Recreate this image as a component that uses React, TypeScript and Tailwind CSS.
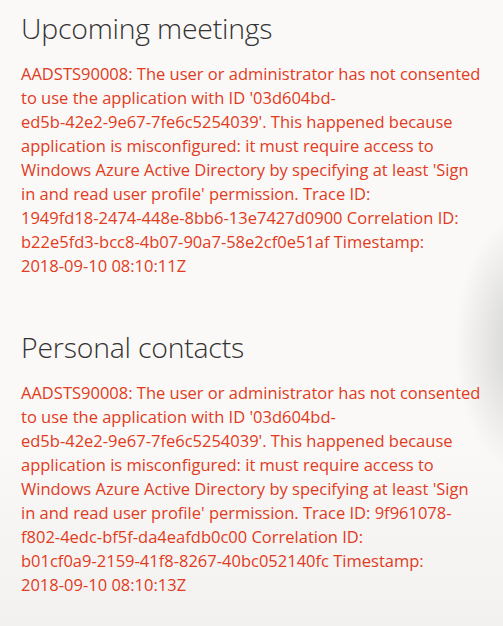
import React from "react";

const s1 = [
  "AADSTS90008: The user or administrator has not consented",
  "to use the application with ID '03d604bd-",
  "ed5b-42e2-9e67-7fe6c5254039'. This happened because",
  "application is misconfigured: it must require access to",
  "Windows Azure Active Directory by specifying at least 'Sign",
  "in and read user profile' permission. Trace ID:",
  "1949fd18-2474-448e-8bb6-13e7427d0900 Correlation ID:",
  "b22e5fd3-bcc8-4b07-90a7-58e2cf0e51af Timestamp:",
  "2018-09-10 08:10:11Z",
];

const s2 = [
  "AADSTS90008: The user or administrator has not consented",
  "to use the application with ID '03d604bd-",
  "ed5b-42e2-9e67-7fe6c5254039'. This happened because",
  "application is misconfigured: it must require access to",
  "Windows Azure Active Directory by specifying at least 'Sign",
  "in and read user profile' permission. Trace ID: 9f961078-",
  "f802-4edc-bf5f-da4eafdb0c00 Correlation ID:",
  "b01cf0a9-2159-41f8-8267-40bc052140fc Timestamp:",
  "2018-09-10 08:10:13Z",
];

function Section({ title, lines }: { title: string; lines: string[] }) {
  return (
    <section className="flex flex-col">
      <h2 className="text-[28.4px] leading-[40px] font-light text-[#333333] tracking-[-0.2px]">
        {title}
      </h2>
      <div className="mt-[14px] text-[16.5px] leading-[24px] text-[#e23b1d]">
        {lines.map((l, i) => (
          <div key={i} className="whitespace-nowrap">
            {l}
          </div>
        ))}
      </div>
    </section>
  );
}

export default function App() {
  return (
    <div
      className="relative w-[503px] h-[626px] overflow-hidden bg-[#faf9f7]"
      style={{ fontFamily: '"Open Sans", "Noto Sans", sans-serif' }}
    >
      <div className="pointer-events-none absolute inset-0 bg-[radial-gradient(ellipse_70px_130px_at_525px_345px,rgba(205,205,205,0.95),rgba(205,205,205,0)_100%)]" />
      <div className="pointer-events-none absolute inset-0 bg-[linear-gradient(180deg,rgba(250,249,247,0)_70%,rgba(243,241,240,1)_100%)]" />
      <div className="relative flex flex-col gap-[49px] pl-[21px] pt-[8px]">
        <Section title="Upcoming meetings" lines={s1} />
        <Section title="Personal contacts" lines={s2} />
      </div>
    </div>
  );
}
